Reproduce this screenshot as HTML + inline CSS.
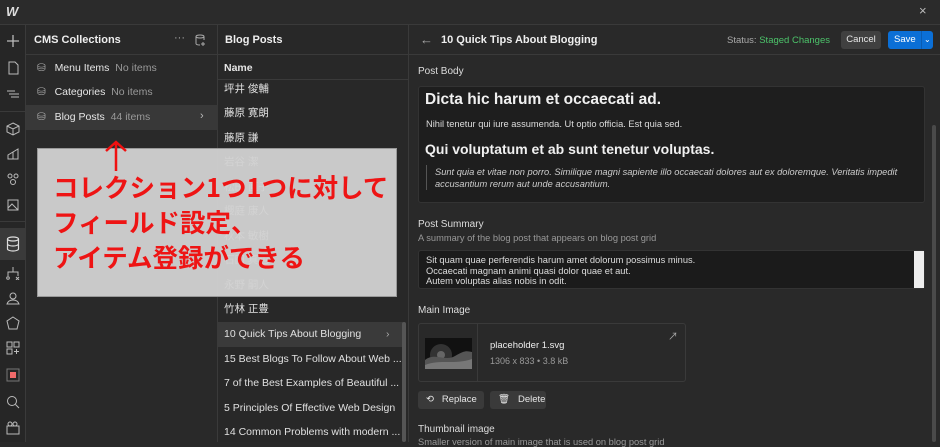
<!DOCTYPE html>
<html><head><meta charset="utf-8"><style>
*{box-sizing:border-box;margin:0;padding:0}
body{width:940px;height:442px;overflow:hidden;background:#292929;font-family:"Liberation Sans","Noto Sans CJK JP",sans-serif;color:#e6e6e6;font-size:11px;position:relative}
.a{position:absolute}
.t{white-space:nowrap}
.rail svg{position:absolute;left:6px}
.row{position:absolute;left:218px;width:185px;height:24px;padding-left:6px;line-height:24px;font-size:10.5px;color:#e0e0e0;white-space:nowrap}
.lbl{font-size:10px;color:#ddd}
</style></head><body>
<div class="a" style="left:0;top:0;width:940px;height:25px;background:#2b2b2b;border-bottom:1px solid #3a3a3a"></div>
<div class="a t" style="left:6px;top:4px;font-weight:bold;font-style:italic;font-size:13px;color:#ddd;letter-spacing:-2px">W</div>
<div class="a t" style="left:919px;top:3px;font-size:13px;color:#bbb">×</div>
<div class="a rail" style="left:0;top:25px;width:26px;height:417px;background:#262626;border-right:1px solid #3a3a3a">
<svg style="top:9px" width="14" height="14" viewBox="0 0 14 14" fill="none" stroke="#bbb" stroke-width="1.3"><path d="M7 1v12M1 7h12"/></svg>
<svg style="top:36px" width="14" height="14" viewBox="0 0 14 14" fill="none" stroke="#bbb"><path d="M3 1h6l3 3v9H3z"/></svg>
<svg style="top:62px" width="14" height="14" viewBox="0 0 14 14" fill="none" stroke="#bbb"><path d="M1 4h8M3 7h10M5 10h8"/></svg>
<div class="a" style="left:0;top:86px;width:26px;border-top:1px solid #3a3a3a"></div>
<svg style="top:97px" width="14" height="14" viewBox="0 0 14 14" fill="none" stroke="#bbb"><path d="M7 1l6 3v6l-6 3-6-3V4zM1 4l6 3 6-3M7 7v6"/></svg>
<svg style="top:122px" width="14" height="14" viewBox="0 0 14 14" fill="none" stroke="#bbb"><path d="M2 12h10V2L2 8zM7 5v7"/></svg>
<svg style="top:147px" width="14" height="14" viewBox="0 0 14 14" fill="none" stroke="#bbb"><circle cx="4" cy="4" r="2"/><circle cx="10" cy="4" r="2"/><circle cx="7" cy="10" r="2.5"/></svg>
<svg style="top:172px" width="14" height="14" viewBox="0 0 14 14" fill="none" stroke="#bbb"><rect x="2" y="3" width="10" height="10"/><path d="M2 11l4-4 6 6"/></svg>
<div class="a" style="left:0;top:196px;width:26px;border-top:1px solid #3a3a3a"></div>
<div class="a" style="left:0;top:203px;width:26px;height:32px;background:#3a3a3a"></div>
<svg style="top:211px" width="14" height="16" viewBox="0 0 14 16" fill="none" stroke="#ddd" stroke-width="1.2"><ellipse cx="7" cy="3" rx="5.5" ry="2"/><path d="M1.5 3v10c0 1 2.5 2 5.5 2s5.5-1 5.5-2V3M1.5 8c0 1 2.5 2 5.5 2s5.5-1 5.5-2"/></svg>
<svg style="top:241px" width="14" height="14" viewBox="0 0 14 14" fill="none" stroke="#bbb"><path d="M7 1v5M2 10V6h10v4"/><circle cx="2" cy="12" r="1.3"/><path d="M10 11l3 3M13 11l-3 3"/></svg>
<svg style="top:266px" width="14" height="14" viewBox="0 0 14 14" fill="none" stroke="#bbb"><circle cx="7" cy="5" r="3"/><path d="M1 13c1-3 3-4 6-4s5 1 6 4z"/></svg>
<svg style="top:291px" width="14" height="14" viewBox="0 0 14 14" fill="none" stroke="#bbb"><path d="M7 1l6 4-2 8H3L1 5z"/></svg>
<svg style="top:316px" width="14" height="14" viewBox="0 0 14 14" fill="none" stroke="#bbb"><rect x="1" y="1" width="5" height="5"/><rect x="8" y="1" width="5" height="5"/><rect x="1" y="8" width="5" height="5"/><path d="M10.5 8v5M8 10.5h5"/></svg>
<svg style="top:343px" width="14" height="14" viewBox="0 0 14 14"><rect x="1" y="1" width="12" height="12" fill="none" stroke="#777"/><rect x="4" y="4" width="6" height="6" fill="#f06a6a"/></svg>
<svg style="top:370px" width="14" height="14" viewBox="0 0 14 14" fill="none" stroke="#bbb"><circle cx="6" cy="6" r="4.5"/><path d="M9.5 9.5L13 13"/></svg>
<svg style="top:396px" width="14" height="14" viewBox="0 0 14 14" fill="none" stroke="#bbb"><rect x="1" y="5" width="12" height="8"/><circle cx="4" cy="3" r="2"/><circle cx="9" cy="3" r="2"/></svg>
</div>
<div class="a" style="left:26px;top:25px;width:192px;height:417px;background:#292929;border-right:1px solid #3a3a3a"></div>
<div class="a" style="left:26px;top:54px;width:192px;border-top:1px solid #3a3a3a"></div>
<div class="a t" style="left:34px;top:34px;font-weight:bold;font-size:11px;color:#eee">CMS Collections</div>
<div class="a t" style="left:174px;top:32px;color:#aaa">···</div>
<svg class="a" style="left:195px;top:34px" width="11" height="12" viewBox="0 0 11 12" fill="none" stroke="#aaa"><ellipse cx="5" cy="2.5" rx="4" ry="1.5"/><path d="M1 2.5v7c0 1 2 1.5 4 1.5M9 2.5V6M8 8v4M6 10h4"/></svg>
<div class="a" style="left:26px;top:105px;width:192px;height:25px;background:#383838"></div>
<div class="a t" style="left:37px;top:62px;font-size:10.5px"><span style="color:#aaa">⛁</span>&nbsp;&nbsp;&nbsp;Menu Items&nbsp;&nbsp;<span style="color:#999">No items</span></div>
<div class="a t" style="left:37px;top:86px;font-size:10.5px"><span style="color:#aaa">⛁</span>&nbsp;&nbsp;&nbsp;Categories&nbsp;&nbsp;<span style="color:#999">No items</span></div>
<div class="a t" style="left:37px;top:111px;font-size:10.5px"><span style="color:#aaa">⛁</span>&nbsp;&nbsp;&nbsp;Blog Posts&nbsp;&nbsp;<span style="color:#999">44 items</span></div>
<div class="a t" style="left:200px;top:110px;color:#bbb">›</div>
<div class="a" style="left:218px;top:25px;width:191px;height:417px;background:#282828;border-right:1px solid #3a3a3a"></div>
<div class="a" style="left:218px;top:54px;width:191px;border-top:1px solid #3a3a3a"></div>
<div class="a" style="left:218px;top:79px;width:191px;border-top:1px solid #3a3a3a"></div>
<div class="a t" style="left:225px;top:34px;font-weight:bold;font-size:11px;color:#eee">Blog Posts</div>
<div class="a t" style="left:224px;top:62px;font-weight:bold;font-size:10.5px">Name</div>
<div class="row" style="top:77px">坪井 俊輔</div>
<div class="row" style="top:101px">藤原 寛朗</div>
<div class="row" style="top:126px">藤原 謙</div>
<div class="row" style="top:150px">岩谷 潔</div>
<div class="row" style="top:175px">松田 直子</div>
<div class="row" style="top:199px">櫻庭 康人</div>
<div class="row" style="top:224px">秋本 敏樹</div>
<div class="row" style="top:248px">石田 真也</div>
<div class="row" style="top:273px">永野 嗣人</div>
<div class="row" style="top:297px">竹林 正豊</div>
<div class="row" style="top:322px;background:#3a3a3a;height:25px">10 Quick Tips About Blogging<span style="position:absolute;left:168px;color:#aaa">›</span></div>
<div class="row" style="top:347px">15 Best Blogs To Follow About Web ...</div>
<div class="row" style="top:371px">7 of the Best Examples of Beautiful ...</div>
<div class="row" style="top:396px">5 Principles Of Effective Web Design</div>
<div class="row" style="top:420px">14 Common Problems with modern ...</div>
<div class="a" style="left:402px;top:322px;width:4px;height:120px;background:#555;border-radius:2px"></div>
<div class="a" style="left:409px;top:54px;width:531px;border-top:1px solid #3a3a3a"></div>
<div class="a t" style="left:420px;top:32px;color:#aaa;font-size:13px">←</div>
<div class="a t" style="left:441px;top:34px;font-weight:bold;font-size:11px;color:#eee">10 Quick Tips About Blogging</div>
<div class="a t" style="left:727px;top:35px;font-size:9.5px;color:#aaa">Status: <span style="color:#4cc36a">Staged Changes</span></div>
<div class="a t" style="left:841px;top:31px;width:40px;height:18px;background:#404040;border-radius:3px;font-size:9.5px;text-align:center;line-height:18px">Cancel</div>
<div class="a t" style="left:888px;top:31px;width:45px;height:18px;background:#0b6fd6;border-radius:3px;font-size:9.5px;line-height:18px;padding-left:6px;color:#fff">Save <span style="position:absolute;left:33px;font-size:8px;border-left:1px solid #0a5cb2;padding-left:2px">⌄</span></div>
<div class="a" style="left:932px;top:125px;width:4px;height:317px;background:#4a4a4a;border-radius:2px"></div>
<div class="a t lbl" style="left:418px;top:66px">Post Body</div>
<div class="a" style="left:418px;top:86px;width:507px;height:117px;background:#1e1e1e;border:1px solid #333;border-radius:3px"></div>
<div class="a t" style="left:425px;top:91px;font-size:15.5px;font-weight:bold;color:#f0f0f0">Dicta hic harum et occaecati ad.</div>
<div class="a t" style="left:426px;top:119px;font-size:9.3px;color:#ddd">Nihil tenetur qui iure assumenda. Ut optio officia. Est quia sed.</div>
<div class="a t" style="left:425px;top:141px;font-size:14px;font-weight:bold;color:#f0f0f0">Qui voluptatum et ab sunt tenetur voluptas.</div>
<div class="a" style="left:426px;top:165px;height:25px;border-left:1px solid #555"></div>
<div class="a" style="left:435px;top:166px;width:490px;font-size:9.3px;font-style:italic;color:#ccc;line-height:12px">Sunt quia et vitae non porro. Similique magni sapiente illo occaecati dolores aut ex doloremque. Veritatis impedit accusantium rerum aut unde accusantium.</div>
<div class="a t lbl" style="left:418px;top:219px">Post Summary</div>
<div class="a t" style="left:418px;top:233px;font-size:9.3px;color:#999">A summary of the blog post that appears on blog post grid</div>
<div class="a" style="left:418px;top:250px;width:507px;height:39px;background:#1b1b1b;border:1px solid #333;border-radius:3px;overflow:hidden;padding:4px 7px;font-size:9.3px;line-height:10.7px;color:#ddd">Sit quam quae perferendis harum amet dolorum possimus minus.<br>Occaecati magnam animi quasi dolor quae et aut.<br>Autem voluptas alias nobis in odit.<br>Aut dolor quos.</div>
<div class="a" style="left:914px;top:251px;width:10px;height:37px;background:#eee"></div>
<div class="a t lbl" style="left:418px;top:305px">Main Image</div>
<div class="a" style="left:418px;top:323px;width:268px;height:59px;border:1px solid #3a3a3a;border-radius:3px"></div>
<div class="a" style="left:477px;top:323px;height:59px;border-left:1px solid #3a3a3a"></div>
<svg class="a" style="left:425px;top:338px" width="47" height="31" viewBox="0 0 47 31"><rect width="47" height="31" fill="#111"/><circle cx="16" cy="17" r="11" fill="#333"/><circle cx="16" cy="17" r="4" fill="#666"/><path d="M0 22c10-8 20 2 30-4s12-5 17-4v17H0z" fill="#555"/><path d="M0 27c15-6 30 0 47-6v10H0z" fill="#777"/></svg>
<div class="a t" style="left:490px;top:340px;font-size:9.5px;color:#eee">placeholder 1.svg</div>
<div class="a t" style="left:490px;top:356px;font-size:9px;color:#999">1306 x 833 • 3.8 kB</div>
<div class="a t" style="left:668px;top:328px;font-size:10px;color:#aaa">↗</div>
<div class="a t" style="left:418px;top:391px;width:66px;height:18px;background:#3a3a3a;border-radius:3px;font-size:9.5px;line-height:18px;padding-left:8px">⟲&nbsp;&nbsp;&nbsp;Replace</div>
<div class="a t" style="left:490px;top:391px;width:56px;height:18px;background:#3a3a3a;border-radius:3px;font-size:9.5px;line-height:18px;padding-left:8px">🗑&nbsp;&nbsp;&nbsp;Delete</div>
<div class="a t lbl" style="left:418px;top:424px">Thumbnail image</div>
<div class="a t" style="left:418px;top:437px;font-size:9.3px;color:#999">Smaller version of main image that is used on blog post grid</div>
<div class="a" style="left:37px;top:148px;width:360px;height:149px;background:rgba(210,210,210,0.95);border:1px solid #999"></div>
<svg class="a" style="left:103px;top:140px" width="26" height="32" viewBox="0 0 26 32" fill="none" stroke="#f01010" stroke-width="2.5"><path d="M13 2v29M3 11l10-9 10 9"/></svg>
<div class="a t" style="left:53px;top:169px;font-size:25.5px;font-weight:bold;color:#ee1414;line-height:35px;font-family:'Noto Sans CJK JP','Liberation Sans',sans-serif;letter-spacing:0px">コレクション1つ1つに対して<br>フィールド設定、<br>アイテム登録ができる</div>
</body></html>
